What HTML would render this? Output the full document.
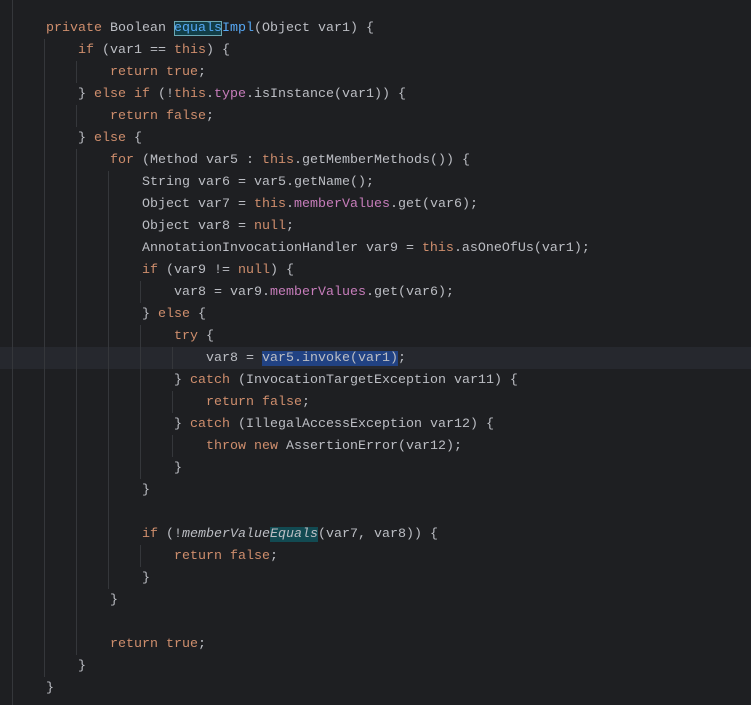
<!DOCTYPE html>
<html><head><meta charset="utf-8"><style>
body{margin:0;width:751px;height:705px;background:#1e1f22;overflow:hidden;position:relative;font-family:"Liberation Mono",monospace;font-size:13.33px;color:#bcbec4}
.l{position:absolute;height:22px;line-height:22px;white-space:pre;left:0;margin-top:1px}
.k{color:#cf8e6d}.f{color:#c77dbb}.m{color:#56a8f5}.i{font-style:italic}
.g{position:absolute;width:1px;background:#35373b}
.cur{position:absolute;left:0;width:751px;top:347px;height:22px;background:#26282e}
.sel{background:#214283}
.hl{background:#124a52}
.hb{background:#123e47;outline:1px solid #6aa6b3;outline-offset:-1px}
</style></head><body>
<div class="cur"></div>
<div class="g" style="left:12px;top:0;height:705px"></div>
<div class="g" style="left:44px;top:39px;height:638px"></div>
<div class="g" style="left:76px;top:61px;height:22px"></div>
<div class="g" style="left:76px;top:105px;height:22px"></div>
<div class="g" style="left:76px;top:149px;height:506px"></div>
<div class="g" style="left:108px;top:171px;height:418px"></div>
<div class="g" style="left:140px;top:281px;height:22px"></div>
<div class="g" style="left:140px;top:325px;height:154px"></div>
<div class="g" style="left:140px;top:545px;height:22px"></div>
<div class="g" style="left:172px;top:347px;height:22px"></div>
<div class="g" style="left:172px;top:391px;height:22px"></div>
<div class="g" style="left:172px;top:435px;height:22px"></div>

<div class="l" style="top:17px;left:46px"><span class="k">private</span> Boolean <span class="m"><span class="hb">equals</span>Impl</span>(Object var1) {</div>
<div class="l" style="top:39px;left:78px"><span class="k">if</span> (var1 == <span class="k">this</span>) {</div>
<div class="l" style="top:61px;left:110px"><span class="k">return true</span>;</div>
<div class="l" style="top:83px;left:78px">} <span class="k">else if</span> (!<span class="k">this</span>.<span class="f">type</span>.isInstance(var1)) {</div>
<div class="l" style="top:105px;left:110px"><span class="k">return false</span>;</div>
<div class="l" style="top:127px;left:78px">} <span class="k">else</span> {</div>
<div class="l" style="top:149px;left:110px"><span class="k">for</span> (Method var5 : <span class="k">this</span>.getMemberMethods()) {</div>
<div class="l" style="top:171px;left:142px">String var6 = var5.getName();</div>
<div class="l" style="top:193px;left:142px">Object var7 = <span class="k">this</span>.<span class="f">memberValues</span>.get(var6);</div>
<div class="l" style="top:215px;left:142px">Object var8 = <span class="k">null</span>;</div>
<div class="l" style="top:237px;left:142px">AnnotationInvocationHandler var9 = <span class="k">this</span>.asOneOfUs(var1);</div>
<div class="l" style="top:259px;left:142px"><span class="k">if</span> (var9 != <span class="k">null</span>) {</div>
<div class="l" style="top:281px;left:174px">var8 = var9.<span class="f">memberValues</span>.get(var6);</div>
<div class="l" style="top:303px;left:142px">} <span class="k">else</span> {</div>
<div class="l" style="top:325px;left:174px"><span class="k">try</span> {</div>
<div class="l" style="top:347px;left:206px">var8 = <span class="sel">var5.invoke(var1)</span>;</div>
<div class="l" style="top:369px;left:174px">} <span class="k">catch</span> (InvocationTargetException var11) {</div>
<div class="l" style="top:391px;left:206px"><span class="k">return false</span>;</div>
<div class="l" style="top:413px;left:174px">} <span class="k">catch</span> (IllegalAccessException var12) {</div>
<div class="l" style="top:435px;left:206px"><span class="k">throw new</span> AssertionError(var12);</div>
<div class="l" style="top:457px;left:174px">}</div>
<div class="l" style="top:479px;left:142px">}</div>
<div class="l" style="top:523px;left:142px"><span class="k">if</span> (!<span class="i">memberValue<span class="hl">Equals</span></span>(var7, var8)) {</div>
<div class="l" style="top:545px;left:174px"><span class="k">return false</span>;</div>
<div class="l" style="top:567px;left:142px">}</div>
<div class="l" style="top:589px;left:110px">}</div>
<div class="l" style="top:633px;left:110px"><span class="k">return true</span>;</div>
<div class="l" style="top:655px;left:78px">}</div>
<div class="l" style="top:677px;left:46px">}</div>
</body></html>
